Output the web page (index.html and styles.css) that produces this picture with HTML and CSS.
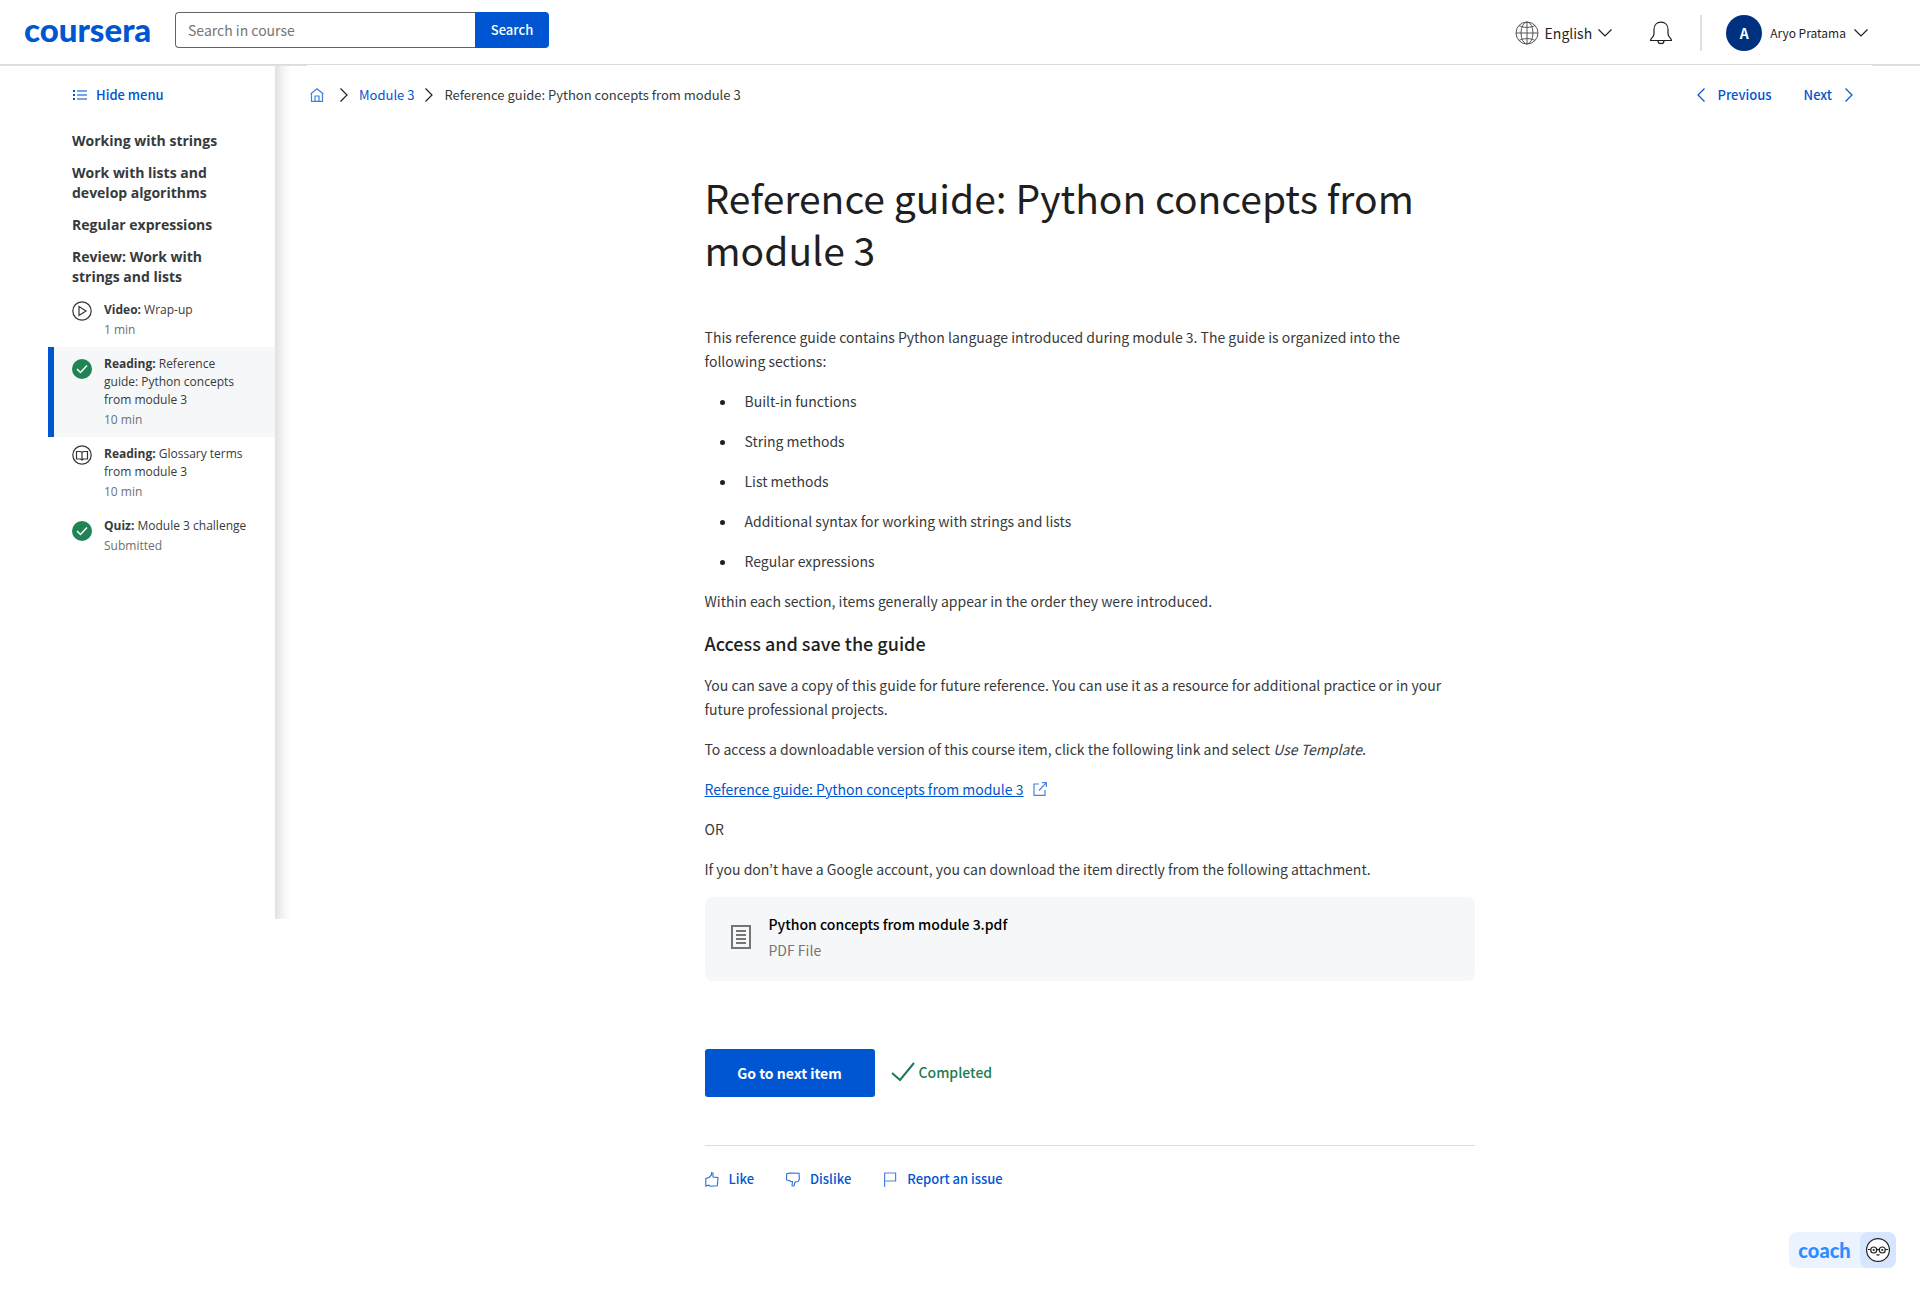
FILE: index.html
```html
<!DOCTYPE html>
<html lang="en">
<head>
<meta charset="utf-8">
<meta name="viewport" content="width=device-width, initial-scale=1">
<title>Reference guide: Python concepts from module 3 | Coursera</title>
<link rel="stylesheet" href="styles.css">
</head>
<body>
<header class="topbar">
  <a class="logo" href="#">coursera</a>
  <form class="search">
    <input class="search-input" type="text" placeholder="Search in course" aria-label="Search in course">
    <button class="search-button" type="submit">Search</button>
  </form>
  <div class="account">
    <button class="language" type="button">
      <svg width="24" height="24" viewBox="0 0 24 24" fill="none" stroke="#555" stroke-width="1"><circle cx="12" cy="12" r="11"/><ellipse cx="12" cy="12" rx="6" ry="11"/><path d="M12 1v22M1 12h22M4 4.500c4 2.500 12 2.500 16 0M4 19.500c4-2.500 12-2.500 16 0"/></svg>
      <span>English</span>
      <svg class="caret" width="14" height="8" viewBox="0 0 14 8" fill="none" stroke="#1f1f1f" stroke-width="1.200"><path d="M.5.5 7 7l6.500-6.500"/></svg>
    </button>
    <button class="bell" type="button" aria-label="Notifications">
      <svg width="24" height="24" viewBox="0 0 24 24" fill="none" stroke="#1f1f1f" stroke-width="1.200"><path d="M1.500 19.500c0-2.500 3.500-3 3.500-7V8.500C5 4 8 1.200 12 1.200S19 4 19 8.500v4c0 4 3.500 4.500 3.500 7zM9 19.700c0 4 6 4 6 0"/></svg>
    </button>
    <span class="divider"></span>
    <button class="profile" type="button">
      <span class="avatar">A</span>
      <span>Aryo Pratama</span>
      <svg class="caret" width="14" height="8" viewBox="0 0 14 8" fill="none" stroke="#1f1f1f" stroke-width="1.200"><path d="M.5.5 7 7l6.500-6.500"/></svg>
    </button>
  </div>
</header>
<div class="layout">
  <aside class="sidebar">
    <button class="hide-menu" type="button">
      <svg width="16" height="12" viewBox="0 0 16 12"><path fill="#0056d2" d="M1 1h2v2H1zM1 5h2v2H1zM1 9h2v2H1z"/><path fill="#78a5e8" d="M5 1h10v2H5zM5 5h10v2H5zM5 9h10v2H5z"/></svg>
      <span>Hide menu</span>
    </button>
    <nav class="sections" aria-label="Lessons">
      <a href="#">Working with strings</a>
      <a href="#">Work with lists and develop algorithms</a>
      <a href="#">Regular expressions</a>
      <a href="#">Review: Work with strings and lists</a>
    </nav>
    <ul class="items">
      <li><a class="item" href="#">
        <svg class="item-icon" width="20" height="20" viewBox="0 0 20 20" fill="none" stroke="#333" stroke-width="1.200"><circle cx="10" cy="10" r="9.200"/><path d="M7 5.500v9l7-4.500z"/></svg>
        <span class="item-text"><span><b>Video:</b> Wrap-up</span><small>1 min</small></span>
      </a></li>
      <li><a class="item item-current" href="#">
        <svg class="item-icon item-done" width="20" height="20" viewBox="0 0 20 20"><circle cx="10" cy="10" r="10" fill="#1f8354"/><path d="m5 10 3.500 3.500 6.500-7" fill="none" stroke="#fff" stroke-width="1.500"/></svg>
        <span class="item-text"><span><b>Reading:</b> Reference guide: Python concepts from module 3</span><small>10 min</small></span>
      </a></li>
      <li><a class="item" href="#">
        <svg class="item-icon" width="20" height="20" viewBox="0 0 20 20" fill="none" stroke="#333" stroke-width="1.200"><circle cx="10" cy="10" r="9.200"/><path d="M10 7.500c-.5-1-1.500-1-2.500-1h-3v7.500h4L10 15l1.500-1h4V6.500h-3c-1 0-2 0-2.500 1zM10 7.500V15"/></svg>
        <span class="item-text"><span><b>Reading:</b> Glossary terms from module 3</span><small>10 min</small></span>
      </a></li>
      <li><a class="item" href="#">
        <svg class="item-icon item-done" width="20" height="20" viewBox="0 0 20 20"><circle cx="10" cy="10" r="10" fill="#1f8354"/><path d="m5 10 3.500 3.500 6.500-7" fill="none" stroke="#fff" stroke-width="1.500"/></svg>
        <span class="item-text"><span><b>Quiz:</b> Module 3 challenge</span><small>Submitted</small></span>
      </a></li>
    </ul>
  </aside>
  <main class="content">
    <div class="navrow">
      <nav class="crumbs" aria-label="Breadcrumb">
        <a class="home" href="#" aria-label="Home"><svg width="14" height="14" viewBox="0 0 14 14" fill="none" stroke="#3f7fdf" stroke-width="1.200"><path d="M.6 6 7 .8 13.400 6M1.500 5.500v7.900h11V5.500M5 13V8h4v5"/></svg></a>
        <svg width="8" height="14" viewBox="0 0 8 14" fill="none" stroke="#1f1f1f" stroke-width="1.200"><path d="m.5.500 6.500 6.500-6.500 6.500"/></svg>
        <a href="#">Module 3</a>
        <svg width="8" height="14" viewBox="0 0 8 14" fill="none" stroke="#1f1f1f" stroke-width="1.200"><path d="m.5.500 6.500 6.500-6.500 6.500"/></svg>
        <span>Reference guide: Python concepts from module 3</span>
      </nav>
      <nav class="pager" aria-label="Course items">
        <a href="#"><svg width="8" height="14" viewBox="0 0 8 14" fill="none" stroke="#0056d2" stroke-width="1.200"><path d="M7.500.5 1 7l6.500 6.500"/></svg>Previous</a>
        <a href="#">Next<svg width="8" height="14" viewBox="0 0 8 14" fill="none" stroke="#0056d2" stroke-width="1.200"><path d="m.5.500 6.500 6.500-6.500 6.500"/></svg></a>
      </nav>
    </div>
    <article class="article">
      <h1>Reference guide: Python concepts from module 3</h1>
      <p>This reference guide contains Python language introduced during module 3. The guide is organized into the following sections:</p>
      <ul>
        <li>Built-in functions</li>
        <li>String methods</li>
        <li>List methods</li>
        <li>Additional syntax for working with strings and lists</li>
        <li>Regular expressions</li>
      </ul>
      <p>Within each section, items generally appear in the order they were introduced.</p>
      <h2>Access and save the guide</h2>
      <p>You can save a copy of this guide for future reference. You can use it as a resource for additional practice or in your future professional projects.</p>
      <p>To access a downloadable version of this course item, click the following link and select <em>Use Template</em>.</p>
      <p><a class="doc-link" href="#"><span>Reference guide: Python concepts from module 3</span><svg width="14" height="14" viewBox="0 0 14 14" fill="none" stroke="#4a86e0" stroke-width="1.200"><path d="M6 2H1v11.400h11V8M9 .6h4.400V5M13.400.6 6 8.500"/></svg></a></p>
      <p>OR</p>
      <p>If you don’t have a Google account, you can download the item directly from the following attachment.</p>
      <a class="attachment" href="#">
        <svg width="20" height="24" viewBox="0 0 20 24"><path fill="none" stroke="#757575" stroke-width="2" d="M1 1h18v22H1z"/><path fill="#757575" d="M5 5h10v2H5zM5 9h10v2H5zM5 13h10v2H5zM5 17h10v2H5z"/></svg>
        <span class="attachment-text"><strong>Python concepts from module 3.pdf</strong><span>PDF File</span></span>
      </a>
      <div class="actions">
        <button class="next-item" type="button">Go to next item</button>
        <span class="completed"><svg width="24" height="20" viewBox="0 0 24 20" fill="none" stroke="#1d7c50" stroke-width="2"><path d="m1 11 8 7L23 1"/></svg>Completed</span>
      </div>
      <div class="feedback">
        <button type="button"><svg width="14" height="15" viewBox="0 0 14 15" fill="none" stroke="#2a70da" stroke-width="1.100"><path d="M4 5.500 6.500 3V.8l1.500.4V5l5 .5-.7 8.200-7.300.5-1.200-1L.8 14V6.500z"/></svg>Like</button>
        <button type="button"><svg width="14" height="15" viewBox="0 0 14 15" fill="none" stroke="#2a70da" stroke-width="1.100"><path d="M3.500 8.500.6 8V2l3-1L13 1.300l.4 5.700L12 9.500l-3 .5-1 4-2-.3.500-4.200H4.500L3.500 8.500"/></svg>Dislike</button>
        <button type="button"><svg width="14" height="15" viewBox="0 0 14 15" fill="none" stroke="#4a86e0" stroke-width="1.200"><path d="M1.600 15V1h11v8h-11"/></svg>Report an issue</button>
      </div>
    </article>
  </main>
</div>
<button class="coach" type="button">
  <span class="coach-label">coach</span>
  <span class="coach-face"><svg width="24" height="24" viewBox="0 0 24 24" fill="none" stroke="#222" stroke-width="1.200"><circle cx="12" cy="12" r="11.400" fill="#fff"/><circle cx="7.700" cy="12" r="3"/><circle cx="16.300" cy="12" r="3"/><path d="M10.700 12c.8-.8 1.800-.8 2.600 0M2 11.500h2.500M19.500 11.500H22M10.500 16.500c1 .8 2 .8 3 0"/><circle cx="7.700" cy="12" r=".5"/><circle cx="16.300" cy="12" r=".5"/></svg></span>
</button>
</body>
</html>
```
FILE: styles.css
```css
* { box-sizing: border-box; }

body {
  margin: 0;
  background: #fff;
  color: #373a3c;
  font-family: "Noto Sans CJK KR", "Noto Sans", sans-serif;
  font-size: 14px;
  line-height: 24px;
}

a { color: #0056d2; text-decoration: none; }

button {
  margin: 0;
  padding: 0;
  border: 0;
  background: none;
  color: inherit;
  font: inherit;
  cursor: pointer;
}

svg { display: block; flex: none; }

.topbar {
  display: flex;
  align-items: center;
  height: 65px;
  padding: 0 52px 0 24px;
  border-bottom: 1px solid #dcdcdc;
}

.logo {
  width: 151px;
  padding-bottom: 6px;
  font-family: Lato, sans-serif;
  font-size: 33px;
  font-weight: 900;
  line-height: 40px;
}

.search { display: flex; height: 36px; margin-bottom: 4px; }

.search-input {
  width: 300px;
  padding: 0 12px;
  border: 1px solid #636363;
  border-right: 0;
  border-radius: 4px 0 0 4px;
  color: #333;
  font: inherit;
}

.search-input::placeholder { color: #757575; opacity: 1; }

.search-button {
  width: 74px;
  border-radius: 0 4px 4px 0;
  background: #0056d2;
  color: #fff;
  font-size: 13px;
  font-weight: 500;
}

.account {
  display: flex;
  align-items: center;
  margin-left: auto;
  padding-top: 2px;
  color: #1f1f1f;
}

.language, .profile { display: flex; align-items: center; }
.language { gap: 6px; }
.bell { margin: 0 27px 0 37px; }
.divider { width: 2px; height: 36px; margin-right: 24px; background: #e1e1e1; }
.profile { gap: 8px; font-size: 12px; }

.avatar {
  width: 36px;
  border-radius: 50%;
  background: #00317f;
  color: #fff;
  font-size: 14px;
  font-weight: 700;
  line-height: 36px;
}

/* The header rule is one pixel heavier over the menu and the right gutter. */
.layout {
  display: flex;
  align-items: flex-start;
  background:
    linear-gradient(#e1e1e1, #e1e1e1) no-repeat left top / 307px 1px,
    linear-gradient(#e1e1e1, #e1e1e1) no-repeat right top / 48px 1px;
}

.sidebar {
  position: relative;
  width: 275px;
  min-height: 854px;
  padding: 18px 0 0 48px;
  font-family: "Open Sans", sans-serif;
}

.sidebar::after {
  content: "";
  position: absolute;
  top: 1px;
  bottom: 0;
  left: 100%;
  width: 16px;
  background: linear-gradient(90deg, #e0e2e2, #f5f5f5 55%, #fff);
}

.hide-menu {
  display: flex;
  align-items: center;
  gap: 8px;
  margin-left: 24px;
  color: #0056d2;
  font-family: "Noto Sans CJK KR", "Noto Sans", sans-serif;
  font-size: 13px;
  font-weight: 500;
}

.sections {
  display: flex;
  flex-direction: column;
  gap: 12px;
  padding: 24px 40px 6px 24px;
  font-weight: 700;
  line-height: 20px;
}

.sections a { color: #373a3c; }

.items {
  margin: 0;
  padding: 0;
  list-style: none;
  font-size: 12px;
  line-height: 18px;
}

.item {
  display: flex;
  gap: 12px;
  padding: 8px 24px 8px 18px;
  border-left: 6px solid transparent;
  color: #373a3c;
}

.item-current { border-color: #0056d2; background: #f5f7f8; }
.item-done { margin-top: 4px; }
.item-text { display: flex; flex-direction: column; gap: 2px; }
.item-text small { color: #707070; font-size: 12px; }

.content { flex: 1; padding: 17px 67px 80px 35px; }

.navrow { display: flex; justify-content: space-between; font-size: 13px; }
.crumbs { display: flex; align-items: center; gap: 11px; padding-top: 1px; }
.home { margin-right: 5px; }
.pager { display: flex; gap: 32px; font-weight: 500; }
.pager a { display: flex; align-items: center; gap: 13px; }

.article { max-width: 786px; margin: 64px auto 0; padding-left: 16px; }

.article h1 {
  margin: 0 0 50px;
  color: #1f1f1f;
  font-size: 39px;
  font-weight: 400;
  line-height: 52px;
}

.article h2 {
  margin: 16px 0;
  color: #1f1f1f;
  font-size: 18px;
  font-weight: 500;
  line-height: 28px;
}

.article p { max-width: 750px; margin: 0 0 16px; }
.article ul { margin: 0; padding-left: 32px; }
.article li { margin-bottom: 16px; padding-left: 8px; }
.article li::marker { color: #1f1f1f; }

.doc-link { display: inline-flex; align-items: center; gap: 9px; vertical-align: top; }
.doc-link span { text-decoration: underline; }

.attachment {
  display: flex;
  align-items: center;
  gap: 18px;
  height: 84px;
  padding: 0 26px 4px;
  border-radius: 8px;
  background: #f5f7f8;
  color: #757575;
}

.attachment-text { display: flex; flex-direction: column; line-height: 26px; }
.attachment-text strong { color: #000; font-weight: 500; }

.actions { display: flex; align-items: center; gap: 16px; padding: 68px 0 48px; }

.next-item {
  width: 170px;
  height: 48px;
  border-radius: 3px;
  background: #0056d2;
  color: #fff;
  font-weight: 700;
}

.completed {
  display: flex;
  align-items: center;
  gap: 4px;
  padding-bottom: 2px;
  color: #1d7c50;
  font-weight: 500;
}

.feedback {
  display: flex;
  gap: 32px;
  padding-top: 21px;
  border-top: 1px solid #dcdcdc;
  color: #0056d2;
  font-size: 13px;
  font-weight: 500;
}

.feedback button { display: flex; align-items: center; gap: 10px; }

.coach {
  position: fixed;
  right: 24px;
  bottom: 24px;
  display: flex;
  height: 36px;
  border-radius: 8px;
  background: #ebf3ff;
}

.coach-label {
  width: 71px;
  color: #2d8cff;
  font-family: Lato, sans-serif;
  font-size: 20px;
  font-weight: 900;
  line-height: 36px;
}

.coach-face { padding: 6px; border-radius: 8px; background: #d6e6ff; }
```
